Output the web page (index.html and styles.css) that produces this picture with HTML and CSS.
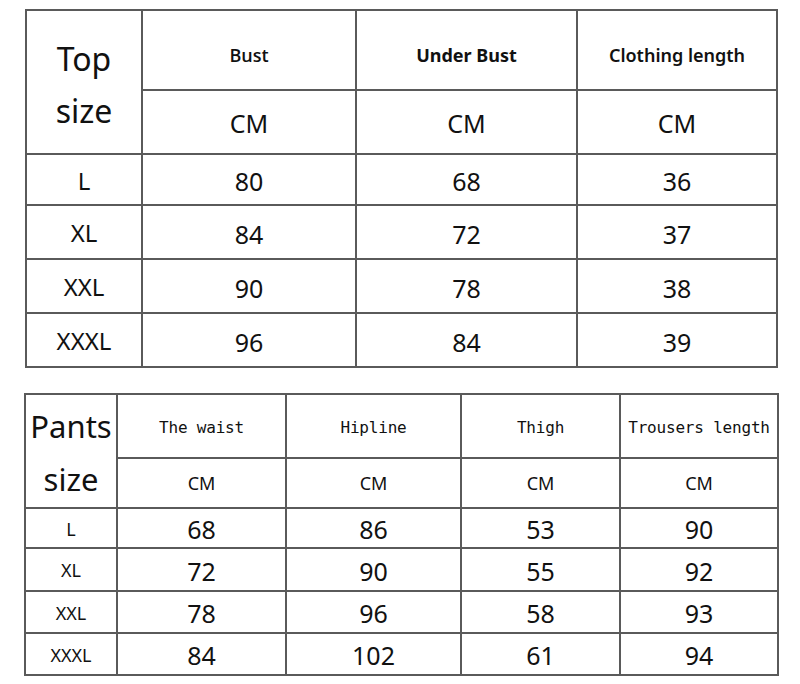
FILE: index.html
```html
<!DOCTYPE html>
<html>
<head>
<meta charset="utf-8">
<link rel="stylesheet" href="styles.css">
</head>
<body>
<div class="chart top">
  <div class="cell title span2">Top<br>size</div>
  <div class="cell head medium">Bust</div>
  <div class="cell head bold">Under Bust</div>
  <div class="cell head semi">Clothing length</div>
  <div class="cell cm">CM</div>
  <div class="cell cm">CM</div>
  <div class="cell cm">CM</div>
  <div class="cell size">L</div><div class="cell num">80</div><div class="cell num">68</div><div class="cell num">36</div>
  <div class="cell size">XL</div><div class="cell num">84</div><div class="cell num">72</div><div class="cell num">37</div>
  <div class="cell size">XXL</div><div class="cell num">90</div><div class="cell num">78</div><div class="cell num">38</div>
  <div class="cell size">XXXL</div><div class="cell num">96</div><div class="cell num">84</div><div class="cell num">39</div>
</div>
<div class="chart pants">
  <div class="cell title span2">Pants<br>size</div>
  <div class="cell mono">The waist</div>
  <div class="cell mono">Hipline</div>
  <div class="cell mono">Thigh</div>
  <div class="cell mono">Trousers length</div>
  <div class="cell cm">CM</div>
  <div class="cell cm">CM</div>
  <div class="cell cm">CM</div>
  <div class="cell cm">CM</div>
  <div class="cell size">L</div><div class="cell num">68</div><div class="cell num">86</div><div class="cell num">53</div><div class="cell num">90</div>
  <div class="cell size">XL</div><div class="cell num">72</div><div class="cell num">90</div><div class="cell num">55</div><div class="cell num">92</div>
  <div class="cell size">XXL</div><div class="cell num">78</div><div class="cell num">96</div><div class="cell num">58</div><div class="cell num">93</div>
  <div class="cell size">XXXL</div><div class="cell num">84</div><div class="cell num">102</div><div class="cell num">61</div><div class="cell num">94</div>
</div>
</body>
</html>
```

FILE: styles.css
```css
html, body {
  margin: 0;
  padding: 0;
  background: #fff;
}
body {
  font-family: "Noto Sans", "Open Sans", sans-serif;
  color: #111;
  width: 800px;
  height: 684px;
  overflow: hidden;
}
.chart {
  display: grid;
  border-left: 2px solid #5a5a5a;
  border-top: 2px solid #5a5a5a;
  width: max-content;
}
.top {
  margin: 9px 0 0 25px;
  grid-template-columns: 116px 214px 221px 200px;
  grid-template-rows: 80px 64px 51px 54px 54px 54px;
}
.pants {
  margin: 25px 0 0 24px;
  grid-template-columns: 92px 169px 175px 159px 158px;
  grid-template-rows: 64px 50px 40px 43px 42px 42px;
}
.cell {
  box-sizing: border-box;
  border-right: 2px solid #5a5a5a;
  border-bottom: 2px solid #5a5a5a;
  display: flex;
  align-items: center;
  justify-content: center;
  text-align: center;
  white-space: nowrap;
}
.span2 {
  grid-row: span 2;
}
.title {
  font-size: 32px;
  line-height: 52px;
  padding-top: 6px;
}
.pants .title {
  font-size: 31px;
  line-height: 53px;
  padding-top: 4px;
}
.head {
  font-size: 18px;
  padding-top: 10px;
}
.medium {
  font-family: "Open Sans", "Noto Sans", sans-serif;
  font-weight: 600;
}
.semi { font-weight: 600; }
.bold { font-weight: 700; }
.cm {
  font-size: 25px;
  padding-top: 2px;
}
.pants .cm {
  font-size: 18px;
  padding-top: 0;
}
.num {
  font-size: 25px;
  padding-top: 3px;
}
.pants .num {
  padding-top: 2px;
}
.size {
  font-size: 24px;
  padding-top: 1px;
}
.pants .size {
  font-size: 18px;
}
.mono {
  font-family: "DejaVu Sans Mono", "Liberation Mono", monospace;
  font-size: 16px;
  letter-spacing: -0.2px;
  padding-top: 2px;
}
```
